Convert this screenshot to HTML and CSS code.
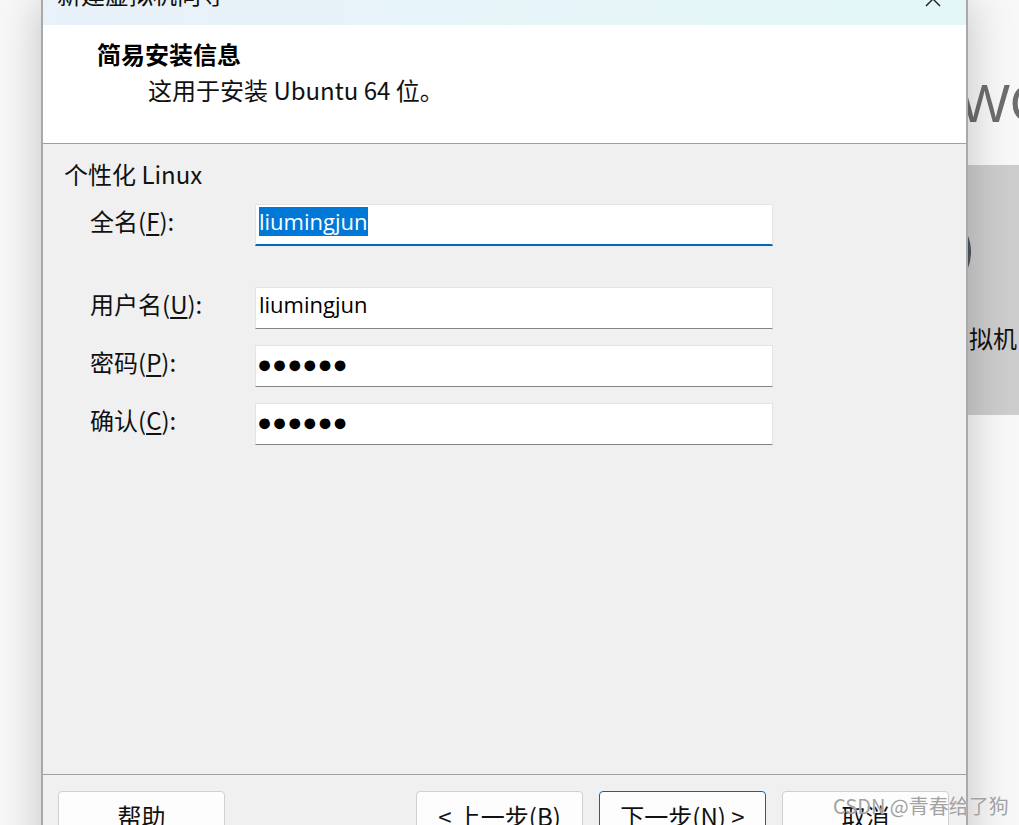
FILE: index.html
```html
<!DOCTYPE html>
<html lang="zh-CN">
<head>
<meta charset="utf-8">
<title>新建虚拟机向导</title>
<link rel="stylesheet" href="styles.css">
</head>
<body>
<div class="desktop">
  <div class="app">
    <div class="app-top"><span class="brand">WORKSTATION</span></div>
    <div class="app-panel">
      <div class="avatar"></div>
      <div class="panel-text">新的虚拟机</div>
    </div>
    <div class="app-rest"></div>
  </div>

  <div class="dialog">
    <div class="titlebar">
      <span class="title-text">新建虚拟机向导</span>
      <svg class="close" width="16" height="16" viewBox="0 0 16 16" aria-hidden="true">
        <path d="M1 1 L15 15 M15 1 L1 15" stroke="#1b1b1b" stroke-width="1.4" fill="none"/>
      </svg>
    </div>
    <div class="header">
      <div class="header-title">简易安装信息</div>
      <div class="header-sub">这用于安装 Ubuntu 64 位。</div>
    </div>
    <div class="content">
      <div class="section-title">个性化 Linux</div>
      <div class="form">
        <div class="field">
          <span class="label">全名(<u>F</u>):</span>
          <div class="input focused"><span class="val selected">liumingjun</span></div>
        </div>
        <div class="field field-user">
          <span class="label">用户名(<u>U</u>):</span>
          <div class="input"><span class="val">liumingjun</span></div>
        </div>
        <div class="field field-gap">
          <span class="label">密码(<u>P</u>):</span>
          <div class="input"><span class="val dots">●●●●●●</span></div>
        </div>
        <div class="field field-gap">
          <span class="label">确认(<u>C</u>):</span>
          <div class="input"><span class="val dots">●●●●●●</span></div>
        </div>
      </div>
    </div>
    <div class="footer">
      <button class="btn">帮助</button>
      <div class="btn-group">
        <button class="btn">&lt; 上一步(<u>B</u>)</button>
        <button class="btn primary">下一步(<u>N</u>) &gt;</button>
        <button class="btn">取消</button>
      </div>
    </div>
  </div>

  <div class="watermark">CSDN @青春给了狗</div>
</div>
</body>
</html>
```
FILE: styles.css
```css
* { box-sizing: border-box; }
html, body {
  margin: 0;
  padding: 0;
  width: 1019px;
  height: 825px;
  overflow: hidden;
  background: #f8f8f8;
}
body {
  font-family: "Noto Sans CJK SC", "Noto Sans", sans-serif;
  color: #111;
}
.desktop {
  position: relative;
  width: 1019px;
  height: 825px;
  display: flex;
  background: #f8f8f8;
  overflow: hidden;
}
.app {
  flex: 1;
  display: flex;
  flex-direction: column;
  padding-left: 881px;
}
.app-top {
  height: 165px;
  padding-top: 76px;
  white-space: nowrap;
}
.brand {
  display: block;
  margin-left: 78px;
  font-family: "Liberation Sans", Arial, sans-serif;
  font-size: 54px;
  line-height: 54px;
  color: #6d6d6d;
}
.app-panel {
  height: 250px;
  margin-left: -60px;
  padding-left: 60px;
  background: #cdcdcd;
  padding-top: 42px;
  white-space: nowrap;
}
.avatar {
  width: 90px;
  height: 90px;
  border-radius: 50%;
  background: #4c5662;
}
.panel-text {
  margin-top: 26px;
  margin-left: 16px;
  font-size: 24px;
  line-height: 30px;
  color: #111;
}
.app-rest { flex: 1; }

.dialog {
  position: absolute;
  left: 41px;
  top: 0;
  width: 927px;
  height: 880px;
  border-left: 2px solid #a9a9a9;
  border-right: 2px solid #a9a9a9;
  background: #f0f0f0;
  display: flex;
  flex-direction: column;
  box-shadow: 0 0 42px rgba(0, 0, 0, 0.22);
}
.titlebar {
  height: 25px;
  flex: none;
  display: flex;
  justify-content: space-between;
  align-items: flex-start;
  padding: 0 25px 0 14px;
  background: linear-gradient(to right, #e9f1f9, #e3f7f7);
  overflow: hidden;
}
.title-text {
  margin-top: -18px;
  font-size: 24px;
  line-height: 24px;
  color: #111;
}
.close {
  margin-top: -9px;
  display: block;
}
.header {
  height: 119px;
  flex: none;
  background: #fff;
  border-bottom: 1px solid #a0a0a0;
  padding: 13px 0 0 54px;
}
.header-title {
  font-size: 24px;
  line-height: 32px;
  font-weight: 700;
  color: #000;
}
.header-sub {
  margin-top: 4px;
  margin-left: 51px;
  font-size: 24px;
  line-height: 32px;
  color: #111;
}
.content {
  height: 630px;
  flex: none;
  padding: 15px 0 0 21px;
}
.section-title {
  font-size: 24px;
  line-height: 30px;
}
.form {
  margin-top: 15px;
  padding-left: 26px;
}
.field {
  display: flex;
  align-items: center;
}
.field-user { margin-top: 41px; }
.field-gap { margin-top: 16px; }
.label {
  width: 165px;
  font-size: 24px;
  line-height: 30px;
  margin-bottom: 8px;
}
.label u { text-underline-offset: 3px; }
.input {
  width: 518px;
  height: 42px;
  background: #fff;
  border: 1px solid #e4e4e4;
  border-bottom: 1px solid #848484;
  padding: 2px 0 0 3px;
  display: flex;
  align-items: flex-start;
}
.input.focused {
  border-bottom: 2px solid #0067c0;
}
.val {
  font-family: "Open Sans", "Noto Sans", sans-serif;
  font-size: 22px;
  line-height: 29px;
  color: #000;
}
.val.selected {
  background: #0078d7;
  color: #fff;
}
.dots {
  font-family: "Liberation Sans", Arial, sans-serif;
  font-size: 25px;
  line-height: 33px;
  margin-left: -2px;
}
.footer {
  flex: 1;
  border-top: 1px solid #a0a0a0;
  padding: 16px 17px 0 15px;
  display: flex;
  justify-content: space-between;
  align-items: flex-start;
}
.btn-group {
  display: flex;
  gap: 16px;
}
.btn {
  width: 167px;
  height: 46px;
  margin: 0;
  padding: 3px 0 0;
  border: 1px solid #d0d0d0;
  border-radius: 4px;
  background: #fdfdfd;
  font-family: "Noto Sans CJK SC", "Noto Sans", sans-serif;
  font-size: 24px;
  line-height: 30px;
  color: #111;
  text-align: center;
  align-self: flex-start;
  display: block;
}
.btn u { text-underline-offset: 3px; }
.btn.primary {
  border-color: #0067c0;
}
.watermark {
  position: absolute;
  left: 833px;
  top: 792px;
  font-size: 20px;
  line-height: 28px;
  color: #a2a2a2;
  white-space: nowrap;
  text-shadow: 0 0 1px rgba(255, 255, 255, 0.9);
}
```
